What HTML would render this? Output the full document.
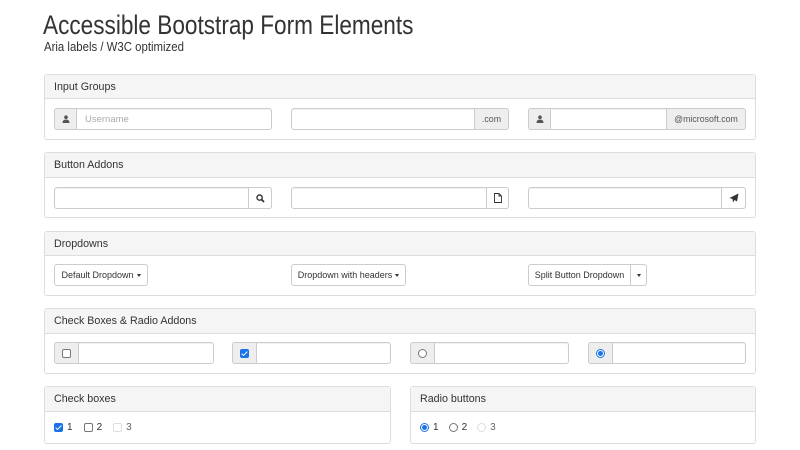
<!DOCTYPE html>
<html><head><meta charset="utf-8"><style>
*{box-sizing:border-box;margin:0;padding:0}
body{width:800px;height:450px;background:#fff;font-family:"Liberation Sans",Arial,sans-serif;color:#333;position:relative;overflow:hidden}
.a{position:absolute}
h1{position:absolute;left:43px;top:10px;font-size:22.6px;font-weight:400;color:#333;white-space:nowrap;transform:scaleY(1.2);transform-origin:0 0}
.sub{position:absolute;left:44px;top:41px;font-size:11.4px;color:#333;transform:scaleY(1.12);transform-origin:0 0}
.panel{position:absolute;border:1px solid #ddd;border-radius:3px;background:#fff}
.ph{position:absolute;left:0;right:0;top:0;background:#f5f5f5;border-bottom:1px solid #ddd;font-size:10.7px;padding-left:9px;color:#333}
.inp{position:absolute;border:1px solid #ccc;border-radius:3px;background:#fff;height:22px;box-shadow:inset 0 1px 1px rgba(0,0,0,.06)}
.ad{position:absolute;top:-1px;bottom:-1px;background:#eee;border:1px solid #ccc;font-size:8.8px;color:#555;display:flex;align-items:center;justify-content:center}
.bt{position:absolute;top:-1px;bottom:-1px;background:#fff;border:1px solid #ccc;display:flex;align-items:center;justify-content:center}
.btn{position:absolute;border:1px solid #ccc;border-radius:3px;background:#fff;height:22px;font-size:9px;color:#333;display:flex;align-items:center;justify-content:center;white-space:nowrap}
.car{display:inline-block;width:0;height:0;border-left:2.5px solid transparent;border-right:2.5px solid transparent;border-top:3px solid #333;margin-left:3px}
.cb{width:9px;height:9px;border:1px solid #767676;border-radius:2px;background:#fff}
.cbc{width:9px;height:9px;border-radius:2px;background:#1a73e8;position:relative}
.cbc:after{content:"";position:absolute;left:3px;top:1px;width:2px;height:5px;border:solid #fff;border-width:0 1.5px 1.5px 0;transform:rotate(45deg)}
.rd{width:9px;height:9px;border:1px solid #767676;border-radius:50%;background:#fff}
.rdc{width:9px;height:9px;border:1px solid #1a73e8;border-radius:50%;background:#fff;display:flex;align-items:center;justify-content:center}
.rdc:after{content:"";width:5px;height:5px;border-radius:50%;background:#1a73e8}
.lbl{font-size:10px;color:#333}
.ph2{color:#aaa;font-size:9.5px;position:absolute;left:30px;top:5px}
</style></head><body>
<h1>Accessible Bootstrap Form Elements</h1>
<div class="sub">Aria labels / W3C optimized</div>

<div class="panel" style="left:44px;top:74px;width:712px;height:66px">
 <div class="ph" style="height:24px;line-height:24px">Input Groups</div>
</div>
<div class="inp" style="left:54px;top:108px;width:218px"><div class="ad" style="left:-1px;width:23px;border-radius:3px 0 0 3px"><svg width="8" height="8" viewBox="0 0 8 8"><circle cx="4" cy="2.2" r="1.8" fill="#555"/><path d="M0.5 8 Q0.5 4.5 4 4.5 Q7.5 4.5 7.5 8Z" fill="#555"/></svg></div><span class="ph2">Username</span></div>
<div class="inp" style="left:291px;top:108px;width:218px"><div class="ad" style="right:-1px;width:35px;border-radius:0 3px 3px 0">.com</div></div>
<div class="inp" style="left:528px;top:108px;width:218px"><div class="ad" style="left:-1px;width:23px;border-radius:3px 0 0 3px"><svg width="8" height="8" viewBox="0 0 8 8"><circle cx="4" cy="2.2" r="1.8" fill="#555"/><path d="M0.5 8 Q0.5 4.5 4 4.5 Q7.5 4.5 7.5 8Z" fill="#555"/></svg></div><div class="ad" style="right:-1px;width:80px;border-radius:0 3px 3px 0">@microsoft.com</div></div>

<div class="panel" style="left:44px;top:152px;width:712px;height:66px">
 <div class="ph" style="height:25px;line-height:25px">Button Addons</div>
</div>
<div class="inp" style="left:54px;top:187px;width:218px"><div class="bt" style="right:-1px;width:24px;border-radius:0 3px 3px 0"><svg width="9" height="9" viewBox="0 0 9 9"><circle cx="3.6" cy="3.6" r="2.6" fill="none" stroke="#333" stroke-width="1.4"/><path d="M5.5 5.5L8 8" stroke="#333" stroke-width="1.8"/></svg></div></div>
<div class="inp" style="left:291px;top:187px;width:218px"><div class="bt" style="right:-1px;width:23px;border-radius:0 3px 3px 0"><svg width="8" height="10" viewBox="0 0 8 10"><path d="M0.5 0.5H5L7.5 3V9.5H0.5Z M5 0.5V3H7.5" fill="none" stroke="#333" stroke-width="0.9"/></svg></div></div>
<div class="inp" style="left:528px;top:187px;width:218px"><div class="bt" style="right:-1px;width:25px;border-radius:0 3px 3px 0"><svg width="10" height="10" viewBox="0 0 10 10"><path d="M9.5 0.5L0.5 5L3.5 6L4 9.5L5.5 7L8 8.5Z" fill="#333"/></svg></div></div>

<div class="panel" style="left:44px;top:231px;width:712px;height:65px">
 <div class="ph" style="height:24px;line-height:24px">Dropdowns</div>
</div>
<div class="btn" style="left:54px;top:264px;width:94px">Default Dropdown<span class="car"></span></div>
<div class="btn" style="left:291px;top:264px;width:115px">Dropdown with headers<span class="car"></span></div>
<div class="btn" style="left:528px;top:264px;width:103px;border-radius:3px 0 0 3px">Split Button Dropdown</div>
<div class="btn" style="left:630px;top:264px;width:17px;border-radius:0 3px 3px 0"><span class="car" style="margin:0"></span></div>

<div class="panel" style="left:44px;top:308px;width:712px;height:66px">
 <div class="ph" style="height:25px;line-height:25px">Check Boxes &amp; Radio Addons</div>
</div>
<div class="inp" style="left:54px;top:342px;width:160px"><div class="ad" style="left:-1px;width:25px;border-radius:3px 0 0 3px"><div class="cb"></div></div></div>
<div class="inp" style="left:232px;top:342px;width:159px"><div class="ad" style="left:-1px;width:25px;border-radius:3px 0 0 3px"><div class="cbc"></div></div></div>
<div class="inp" style="left:410px;top:342px;width:159px"><div class="ad" style="left:-1px;width:25px;border-radius:3px 0 0 3px"><div class="rd"></div></div></div>
<div class="inp" style="left:588px;top:342px;width:158px"><div class="ad" style="left:-1px;width:25px;border-radius:3px 0 0 3px"><div class="rdc"></div></div></div>

<div class="panel" style="left:44px;top:386px;width:347px;height:58px">
 <div class="ph" style="height:25px;line-height:25px">Check boxes</div>
</div>
<div class="a" style="left:54px;top:422px;display:flex;align-items:center;gap:4px">
 <div class="cbc"></div><span class="lbl">1</span>
 <div class="cb" style="margin-left:7px"></div><span class="lbl">2</span>
 <div class="cb" style="margin-left:7px;border-color:#ddd"></div><span class="lbl" style="color:#666">3</span>
</div>

<div class="panel" style="left:410px;top:386px;width:346px;height:58px">
 <div class="ph" style="height:25px;line-height:25px">Radio buttons</div>
</div>
<div class="a" style="left:420px;top:422px;display:flex;align-items:center;gap:4px">
 <div class="rdc"></div><span class="lbl">1</span>
 <div class="rd" style="margin-left:6px"></div><span class="lbl">2</span>
 <div class="rd" style="margin-left:6px;border-color:#ddd"></div><span class="lbl" style="color:#666">3</span>
</div>
</body></html>
